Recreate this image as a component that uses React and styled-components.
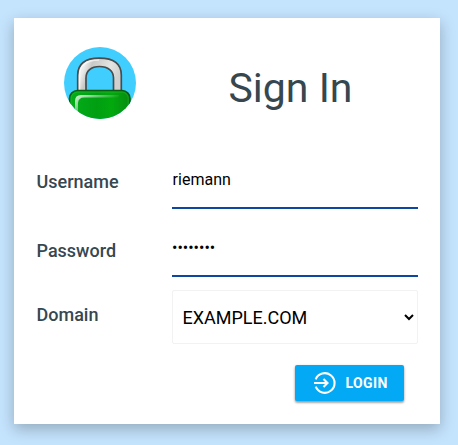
import React from "react";
import styled, { createGlobalStyle } from "styled-components";

const GlobalStyle = createGlobalStyle`
  *, *::before, *::after { box-sizing: border-box; }
  body {
    margin: 0;
    height: 445px;
    overflow: hidden;
    background: #c4e3fd;
    color: #37474f;
    font-family: Roboto, sans-serif;
  }
`;

const Page = styled.main`
  display: flex;
  justify-content: flex-start;
  padding: 18px 0 0 14px;
`;

const Card = styled.form`
  width: 426px;
  height: 406px;
  padding: 29px 22px 0;
  background: #fff;
  box-shadow: 0 5px 14px rgba(0, 0, 0, 0.25);
`;

const Header = styled.header`
  display: grid;
  grid-template-columns: 128px 1fr;
  align-items: center;
  height: 72px;
  margin-bottom: 41px;
`;

const Title = styled.h1`
  margin: 9px 0 0 -1px;
  font-size: 41px;
  line-height: 48px;
  font-weight: 400;
  text-align: center;
`;

const Logo = styled.svg`
  display: block;
  width: 72px;
  height: 72px;
  margin: 0 auto;
`;

const Row = styled.div`
  display: grid;
  grid-template-columns: 136px 246px;
  height: ${(p) => p.$height}px;
`;

const Label = styled.label`
  padding: ${(p) => p.$offset}px 0 0 0.5px;
  font-size: 18px;
  line-height: 22px;
  font-weight: 500;
`;

const TextInput = styled.input`
  width: 100%;
  height: 49px;
  padding: 0 0 9px ${(p) => (p.type === "password" ? 0 : 0.6)}px;
  border: 0;
  border-bottom: 2px solid #0d47a1;
  border-radius: 0;
  outline: 0;
  background: transparent;
  color: #000;
  font: 400 16px Roboto, sans-serif;
`;

const Select = styled.select`
  width: 100%;
  height: 54px;
  padding: 0 1px 0 5.5px;
  border: 1px solid #f2f2f2;
  border-radius: 2px;
  outline: 0;
  background: #fff;
  color: #000;
  font: 400 18px Roboto, sans-serif;
`;

const Actions = styled.div`
  display: flex;
  justify-content: flex-end;
  padding-right: 14px;
`;

const Button = styled.button`
  display: flex;
  align-items: center;
  gap: 8.5px;
  width: 109px;
  height: 36px;
  padding: 0 0 1px 18px;
  border: 0;
  border-radius: 2px;
  background: #03a9f4;
  box-shadow: 0 2px 2px rgba(0, 0, 0, 0.24), 0 1px 3px rgba(0, 0, 0, 0.25);
  color: #fff;
  font: 700 14px Roboto, sans-serif;
  letter-spacing: 0.4px;
`;

function PadlockLogo() {
  return (
    <Logo viewBox="0 0 72 72" aria-hidden="true">
      <defs>
        <clipPath id="disc"><circle cx="36" cy="36" r="36" /></clipPath>
        <linearGradient id="body" x1="0" y1="0" x2="1" y2="0">
          <stop offset="0" stopColor="#04ae19" />
          <stop offset="0.45" stopColor="#009f12" />
          <stop offset="0.7" stopColor="#02a90e" />
          <stop offset="1" stopColor="#078b10" />
        </linearGradient>
        <linearGradient id="steel" x1="0" y1="0" x2="1" y2="0.3">
          <stop offset="0" stopColor="#d4d4d2" />
          <stop offset="0.2" stopColor="#eeeeec" />
          <stop offset="0.35" stopColor="#c8c8c6" />
          <stop offset="0.75" stopColor="#e4e4e2" />
          <stop offset="1" stopColor="#d0d0ce" />
        </linearGradient>
        <linearGradient id="shine" x1="0" y1="0" x2="1" y2="0.6">
          <stop offset="0" stopColor="#fff" stopOpacity="0.85" />
          <stop offset="0.8" stopColor="#fff" stopOpacity="0" />
        </linearGradient>
      </defs>
      <g clipPath="url(#disc)">
        <rect width="72" height="72" fill="#40ceff" />
        <path d="M13.7 46V28C13.7 17 21 11.2 35.5 11.2S57.3 17 57.3 28V46H49.5V31C49.5 24 44 19.5 35.5 19.5S22 24 22 31V46Z" fill="url(#steel)" stroke="#484c4c" strokeWidth="1.7" />
        <path d="M15.5 44V29C15.5 18 22 13 35 13" fill="none" stroke="#fff" strokeOpacity="0.65" strokeWidth="1.5" />
        <rect x="5.5" y="43.5" width="60.5" height="40" rx="8" fill="url(#body)" stroke="#075c0d" strokeWidth="1.6" />
        <rect x="7.2" y="45.2" width="57" height="38" rx="6" fill="none" stroke="#35c243" strokeOpacity="0.3" strokeWidth="1.2" />
        <path d="M11 66V54Q11 48 17 48H55V50.5H20Q14.5 50.5 14 56V66Z" fill="url(#shine)" />
      </g>
    </Logo>
  );
}

function LoginIcon() {
  return (
    <svg width="24" height="24" viewBox="0 0 24 24" fill="none" stroke="#fff" strokeWidth="2.1" aria-hidden="true">
      <path d="M2.7 8.3A9.8 9.8 0 1 1 2.7 15.7" />
      <path d="M1 12H14.5M10.5 8L14.5 12L10.5 16" />
    </svg>
  );
}

export default function App() {
  return (
    <>
      <GlobalStyle />
      <Page>
        <Card onSubmit={(e) => e.preventDefault()}>
          <Header>
            <PadlockLogo />
            <Title>Sign In</Title>
          </Header>
          <Row $height={68}>
            <Label htmlFor="username" $offset={11}>Username</Label>
            <TextInput id="username" defaultValue="riemann" />
          </Row>
          <Row $height={62}>
            <Label htmlFor="password" $offset={12}>Password</Label>
            <TextInput id="password" type="password" defaultValue="abcdefgh" />
          </Row>
          <Row $height={75}>
            <Label htmlFor="domain" $offset={14}>Domain</Label>
            <Select id="domain">
              <option>EXAMPLE.COM</option>
            </Select>
          </Row>
          <Actions>
            <Button type="submit">
              <LoginIcon />
              LOGIN
            </Button>
          </Actions>
        </Card>
      </Page>
    </>
  );
}
